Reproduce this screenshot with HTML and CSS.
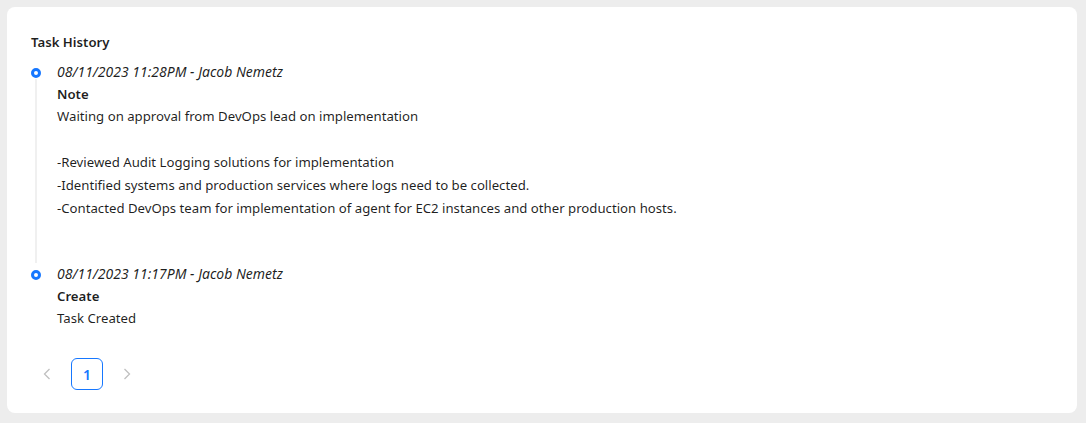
FILE: index.html
```html
<!DOCTYPE html>
<html lang="en">
<head>
    <meta charset="UTF-8">
    <title>Task History</title>
    <link rel="stylesheet" href="styles.css">
</head>
<body>
    <!-- History card -->
    <div class="card">
        <div class="card-title">Task History</div>

        <ul class="timeline">
            <li class="timeline-item">
                <div class="rail">
                    <span class="dot"></span>
                    <span class="tail"></span>
                </div>
                <div class="entry">
                    <div class="entry-meta">08/11/2023 11:28PM - Jacob Nemetz</div>
                    <div class="entry-type">Note</div>
                    <div class="entry-body">Waiting on approval from DevOps lead on implementation

-Reviewed Audit Logging solutions for implementation
-Identified systems and production services where logs need to be collected.
-Contacted DevOps team for implementation of agent for EC2 instances and other production hosts.

</div>
                </div>
            </li>
            <li class="timeline-item last">
                <div class="rail">
                    <span class="dot"></span>
                </div>
                <div class="entry">
                    <div class="entry-meta">08/11/2023 11:17PM - Jacob Nemetz</div>
                    <div class="entry-type">Create</div>
                    <div class="entry-body">Task Created</div>
                </div>
            </li>
        </ul>

        <!-- Pagination -->
        <ul class="pager">
            <li class="pager-arrow">
                <svg width="8" height="12" viewBox="0 0 8 12"><path d="M6.5 1 1.5 6l5 5" fill="none" stroke="currentColor" stroke-width="1.3"/></svg>
            </li>
            <li class="pager-item active">1</li>
            <li class="pager-arrow">
                <svg width="8" height="12" viewBox="0 0 8 12"><path d="M1.5 1l5 5-5 5" fill="none" stroke="currentColor" stroke-width="1.3"/></svg>
            </li>
        </ul>
    </div>
</body>
</html>
```

FILE: styles.css
```css
/* Base */
* {
    margin: 0;
    padding: 0;
    box-sizing: border-box;
}

body {
    background: #ededed;
    padding: 7px 9px 10px 7px;
    font-family: "Noto Sans", "Open Sans", Arial, sans-serif;
    font-size: 13.2px;
    color: rgba(0, 0, 0, 0.88);
}

/* Card */
.card {
    background: #fff;
    border-radius: 8px;
    padding: 24px;
    height: 406px;
}

.card-title {
    font-weight: 600;
    line-height: 22px;
    margin-bottom: 8px;
}

/* Timeline */
.timeline {
    list-style: none;
}

.timeline-item {
    display: flex;
}

.rail {
    width: 10px;
    display: flex;
    flex-direction: column;
    align-items: center;
    padding-top: 7px;
}

.dot {
    width: 10px;
    height: 10px;
    border: 3px solid #1677ff;
    border-radius: 50%;
    flex-shrink: 0;
}

.tail {
    flex: 1;
    width: 2px;
    background: #f0f0f0;
    margin-top: 1px;
}

.entry {
    margin-left: 16px;
    padding-bottom: 20px;
}

.timeline-item.last .entry {
    padding-bottom: 0;
}

.entry-meta {
    font-style: italic;
    font-size: 14px;
    line-height: 22px;
}

.entry-type {
    font-weight: 600;
    line-height: 22px;
}

.entry-body {
    white-space: pre-wrap;
    line-height: 23px;
}

/* Pagination */
.pager {
    list-style: none;
    display: flex;
    gap: 8px;
    margin-top: 28px;
}

.pager-arrow,
.pager-item {
    width: 32px;
    height: 32px;
    display: flex;
    align-items: center;
    justify-content: center;
}

.pager-arrow {
    color: rgba(0, 0, 0, 0.25);
}

.pager-item.active {
    border: 1px solid #1677ff;
    border-radius: 6px;
    color: #1677ff;
    font-weight: 600;
    font-size: 14px;
}
```
